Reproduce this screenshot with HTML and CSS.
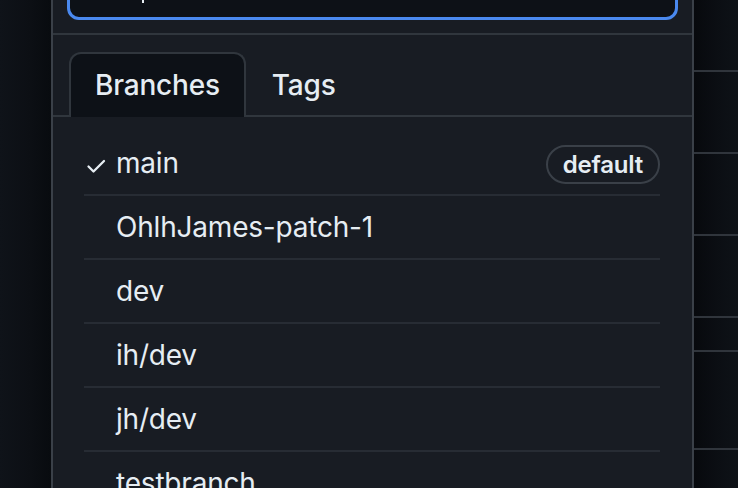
FILE: index.html
```html
<!DOCTYPE html>
<html lang="en">
<head>
<meta charset="utf-8">
<title>Branch selector</title>
<link rel="stylesheet" href="styles.css">
</head>
<body>
<div class="page">
  <div class="side side-left"></div>
  <div class="panel">
    <div class="filter">
      <div class="input"><span class="caret"></span></div>
    </div>
    <div class="tabs">
      <div class="tab active">Branches</div>
      <div class="tab">Tags</div>
    </div>
    <ul class="list">
      <li class="item">
        <span class="icon">
          <svg width="24" height="24" viewBox="0 0 24 24" fill="none" stroke="#e6edf3" stroke-width="2.3" stroke-linecap="round" stroke-linejoin="round"><polyline points="4.5,16.5 9.5,21.5 20,11"/></svg>
        </span>
        <span class="name">main</span>
        <span class="badge">default</span>
      </li>
      <li class="item"><span class="icon"></span><span class="name">OhlhJames-patch-1</span></li>
      <li class="item"><span class="icon"></span><span class="name">dev</span></li>
      <li class="item"><span class="icon"></span><span class="name">ih/dev</span></li>
      <li class="item"><span class="icon"></span><span class="name">jh/dev</span></li>
      <li class="item"><span class="icon"></span><span class="name">testbranch</span></li>
    </ul>
  </div>
  <div class="side side-right">
    <div class="bg-row r1"></div>
    <div class="bg-row r2"></div>
    <div class="bg-row r3"></div>
    <div class="bg-row r4"></div>
    <div class="bg-row r5"></div>
    <div class="bg-row r6"></div>
    <div class="bg-row r7"></div>
  </div>
</div>
</body>
</html>
```

FILE: styles.css
```css
* { box-sizing: border-box; }

html, body {
  margin: 0;
  padding: 0;
  background: #0d1117;
}

body {
  font-family: Inter, "Noto Sans", "Liberation Sans", sans-serif;
  color: #e6edf3;
}

.page {
  display: flex;
  width: 738px;
  height: 488px;
  overflow: hidden;
}

.side-left {
  width: 51px;
  flex: none;
  background: linear-gradient(to right, #0f1319 0%, #0c0f14 60%, #080b0f 100%);
}

.side-right {
  flex: 1;
  display: flex;
  flex-direction: column;
  background: linear-gradient(to right, #07090d 0%, #0b0e13 50%, #0e1217 100%);
}

.bg-row {
  flex: none;
  border-bottom: 2px solid #30353c;
}
.r1 { height: 72px; }
.r2 { height: 82px; }
.r3 { height: 82px; }
.r4 { height: 82px; }
.r5 { height: 34px; }
.r6 { height: 98px; }
.r7 { flex: 1; border-bottom: none; }

.panel {
  flex: none;
  width: 643px;
  margin-top: -62px;
  align-self: flex-start;
  background: #181c23;
  border-left: 2px solid #3a4048;
  border-right: 2px solid #3a4048;
}

.filter {
  padding: 16px 14px 13px;
  border-bottom: 2px solid #30363d;
}

.input {
  height: 66px;
  border: 3px solid #4a89ef;
  border-radius: 12px;
  background: #0d1117;
  display: flex;
  align-items: center;
  padding-left: 72px;
}

.caret {
  display: block;
  width: 2px;
  height: 34px;
  margin-top: -2px;
  background: #e6edf3;
}

.tabs {
  display: flex;
  padding: 17px 16px 0;
  border-bottom: 2px solid #30363d;
}

.tab {
  height: 65px;
  margin-bottom: -2px;
  padding: 0 24px 2px;
  display: flex;
  align-items: center;
  font-size: 28px;
  font-weight: 500;
  letter-spacing: -0.2px;
  color: #e6edf3;
  border: 2px solid transparent;
  border-bottom: none;
  border-radius: 12px 12px 0 0;
}

.tab.active {
  background: #0d1117;
  border-color: #30363d;
}

.list {
  list-style: none;
  margin: 0;
  padding: 15px 32px 0 31px;
}

.item {
  height: 64px;
  display: flex;
  align-items: center;
  border-bottom: 2px solid #272c34;
  font-size: 28px;
  letter-spacing: -0.2px;
  color: #e6edf3;
}

.icon {
  flex: none;
  width: 24px;
  height: 24px;
  margin-right: 8px;
  display: flex;
}

.icon svg { display: block; margin-top: -1px; }

.name { flex: 1; }

.badge {
  flex: none;
  height: 39px;
  margin-top: 2px;
  padding: 0 15px;
  display: flex;
  align-items: center;
  border: 2px solid #3a4048;
  border-radius: 999px;
  font-size: 24px;
  font-weight: 600;
  letter-spacing: -0.2px;
  color: #e6edf3;
}
```
